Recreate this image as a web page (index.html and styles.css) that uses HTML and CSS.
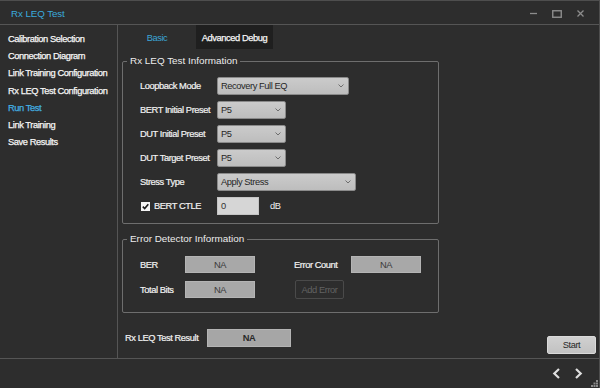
FILE: index.html
```html
<!DOCTYPE html>
<html>
<head>
<meta charset="utf-8">
<title>Rx LEQ Test</title>
<link rel="stylesheet" href="styles.css">
</head>
<body>
<div class="window">
  <header class="titlebar">
    <span class="title">Rx LEQ Test</span>
    <div class="winctl">
      <svg class="ctl" width="7" height="7" viewBox="0 0 7 7"><path d="M0 3.5H7" stroke="#8c8c8c" stroke-width="1.3"/></svg>
      <svg class="ctl" width="10" height="8" viewBox="0 0 10 8"><rect x="0.75" y="0.75" width="8.5" height="6.5" fill="none" stroke="#8c8c8c" stroke-width="1.4"/></svg>
      <svg class="ctl" width="7" height="7" viewBox="0 0 7 7"><path d="M0.5 0.5L6.5 6.5M6.5 0.5L0.5 6.5" stroke="#8c8c8c" stroke-width="1.3"/></svg>
    </div>
  </header>
  <div class="main">
    <nav class="sidebar">
      <div class="nav-item">Calibration Selection</div>
      <div class="nav-item">Connection Diagram</div>
      <div class="nav-item">Link Training Configuration</div>
      <div class="nav-item">Rx LEQ Test Configuration</div>
      <div class="nav-item active">Run Test</div>
      <div class="nav-item">Link Training</div>
      <div class="nav-item">Save Results</div>
    </nav>
    <section class="content">
      <div class="tabs">
        <div class="tab tab-active">Basic</div>
        <div class="tab tab-dark">Advanced Debug</div>
      </div>
      <div class="panel">
        <fieldset class="group group-info">
          <legend>Rx LEQ Test Information</legend>
          <div class="form-grid">
            <div class="lbl">Loopback Mode</div>
            <div class="select w-long"><span>Recovery Full EQ</span><svg class="chev" width="6" height="4" viewBox="0 0 6 4"><path d="M0.5 0.5L3 3L5.5 0.5" fill="none" stroke="#6e6e6e" stroke-width="1"/></svg></div>
            <div class="lbl">BERT Initial Preset</div>
            <div class="select w-short"><span>P5</span><svg class="chev" width="6" height="4" viewBox="0 0 6 4"><path d="M0.5 0.5L3 3L5.5 0.5" fill="none" stroke="#6e6e6e" stroke-width="1"/></svg></div>
            <div class="lbl">DUT Initial Preset</div>
            <div class="select w-short"><span>P5</span><svg class="chev" width="6" height="4" viewBox="0 0 6 4"><path d="M0.5 0.5L3 3L5.5 0.5" fill="none" stroke="#6e6e6e" stroke-width="1"/></svg></div>
            <div class="lbl">DUT Target Preset</div>
            <div class="select w-short"><span>P5</span><svg class="chev" width="6" height="4" viewBox="0 0 6 4"><path d="M0.5 0.5L3 3L5.5 0.5" fill="none" stroke="#6e6e6e" stroke-width="1"/></svg></div>
            <div class="lbl">Stress Type</div>
            <div class="select w-stress"><span>Apply Stress</span><svg class="chev" width="6" height="4" viewBox="0 0 6 4"><path d="M0.5 0.5L3 3L5.5 0.5" fill="none" stroke="#6e6e6e" stroke-width="1"/></svg></div>
            <div class="lbl check-lbl">
              <svg class="checkbox" width="9" height="9" viewBox="0 0 9 9"><rect x="0" y="0" width="9" height="9" fill="#f4f4f4"/><path d="M1.8 4.6L3.7 6.6L7.3 2.2" fill="none" stroke="#1a1a1a" stroke-width="1.6"/></svg>
              <span>BERT CTLE</span>
            </div>
            <div class="ctle">
              <div class="textbox">0</div>
              <span class="unit">dB</span>
            </div>
          </div>
        </fieldset>
        <fieldset class="group group-err">
          <legend>Error Detector Information</legend>
          <div class="err-grid">
            <div class="lbl">BER</div>
            <div class="field">NA</div>
            <div></div>
            <div class="lbl">Error Count</div>
            <div class="field">NA</div>
            <div class="lbl">Total Bits</div>
            <div class="field">NA</div>
            <div></div>
            <div class="btn-disabled">Add Error</div>
            <div></div>
          </div>
        </fieldset>
        <div class="bottom-row">
          <div class="result">
            <div class="lbl result-lbl">Rx LEQ Test Result</div>
            <div class="field result-field">NA</div>
          </div>
          <div class="btn-start">Start</div>
        </div>
      </div>
    </section>
  </div>
  <footer class="footer">
    <svg width="9" height="11" viewBox="0 0 9 11"><path d="M7 1L2.3 5.5L7 10" fill="none" stroke="#dedede" stroke-width="2.2"/></svg>
    <svg width="9" height="11" viewBox="0 0 9 11"><path d="M2 1L6.7 5.5L2 10" fill="none" stroke="#dedede" stroke-width="2.2"/></svg>
    <svg class="grip" width="7" height="7" viewBox="0 0 7 7"><rect x="5" y="0" width="2" height="2" fill="#8a8a8a"/><rect x="2.5" y="2.5" width="2" height="2" fill="#8a8a8a"/><rect x="5" y="2.5" width="2" height="2" fill="#8a8a8a"/><rect x="0" y="5" width="2" height="2" fill="#8a8a8a"/><rect x="2.5" y="5" width="2" height="2" fill="#8a8a8a"/><rect x="5" y="5" width="2" height="2" fill="#8a8a8a"/></svg>
  </footer>
</div>
</body>
</html>
```

FILE: styles.css
```css
html, body {
  margin: 0;
  padding: 0;
  background: #2d2d2d;
}

body {
  width: 600px;
  height: 388px;
  overflow: hidden;
  font-family: "Liberation Sans", Arial, sans-serif;
  font-size: 9.3px;
  letter-spacing: -0.42px;
  color: #f0f0f0;
}

.window {
  position: relative;
  box-sizing: border-box;
  width: 600px;
  height: 388px;
  border-top: 1px solid #4e4e4e;
  border-right: 1px solid #4e4e4e;
  display: flex;
  flex-direction: column;
}

/* Title bar */
.titlebar {
  height: 24px;
  border-bottom: 1px solid #555555;
  display: flex;
  align-items: center;
  justify-content: space-between;
  padding: 2px 15px 0 11px;
  box-sizing: border-box;
  flex: none;
}

.title {
  font-size: 9.8px;
  letter-spacing: -0.1px;
  color: #3aa9dc;
}

.winctl {
  display: flex;
  align-items: center;
  gap: 15px;
}

.ctl {
  display: block;
}

/* Main area */
.main {
  display: flex;
  flex: 1;
  min-height: 0;
}

.sidebar {
  flex: none;
  width: 118px;
  border-right: 1px solid #555555;
  padding: 6px 0 0 8px;
  box-sizing: border-box;
}

.nav-item {
  line-height: 17.2px;
  white-space: nowrap;
  color: #f6f6f6;
  -webkit-text-stroke: 0.25px #f6f6f6;
}

.nav-item.active {
  color: #43b0e2;
  -webkit-text-stroke: 0.25px #43b0e2;
}

.content {
  flex: 1;
  display: flex;
  flex-direction: column;
  min-width: 0;
}

.tabs {
  display: flex;
  height: 24px;
  flex: none;
}

.tab {
  box-sizing: border-box;
  display: flex;
  align-items: center;
  justify-content: center;
  height: 24px;
  padding-top: 2px;
}

.tab-active {
  width: 78px;
  color: #3ba6d6;
}

.tab-dark {
  width: 77px;
  background: #1f1f1f;
  color: #f6f6f6;
  -webkit-text-stroke: 0.25px #f6f6f6;
}

.panel {
  flex: 1;
  display: flex;
  flex-direction: column;
  padding-left: 4px;
}

/* Group boxes */
.group {
  width: 317px;
  box-sizing: border-box;
  margin: 0;
  border: 1px solid #6e6e6e;
  border-radius: 2px;
  padding: 10px 4px 8px 4px;
  min-width: 0;
}

.group legend {
  font-size: 9.9px;
  letter-spacing: 0;
  line-height: 12px;
  padding: 0 3px;
  color: #ececec;
}

.group-info {
  margin-top: 6px;
}

.group-err {
  margin-top: 9px;
  padding: 11px 4px 13px 4px;
}

.form-grid {
  margin-left: 13px;
  display: grid;
  grid-template-columns: 77px auto;
  grid-auto-rows: 18px;
  row-gap: 6px;
  align-items: center;
}

.lbl {
  white-space: nowrap;
  color: #f2f2f2;
  -webkit-text-stroke: 0.2px #f2f2f2;
}

.select {
  box-sizing: border-box;
  height: 18px;
  border: 1px solid #8a8a8a;
  border-radius: 2px;
  background: linear-gradient(#cbcbcb, #bdbdbd);
  color: #262626;
  display: flex;
  align-items: center;
  justify-content: space-between;
  padding: 0 4px 0 3px;
}

.chev {
  display: block;
}

.w-long { width: 132px; }
.w-short { width: 69px; }
.w-stress { width: 139px; }

.check-lbl {
  display: flex;
  align-items: center;
  gap: 4px;
  padding-left: 1px;
}

.checkbox {
  display: block;
}

.ctle {
  display: flex;
  align-items: center;
  gap: 11px;
}

.textbox {
  box-sizing: border-box;
  width: 42px;
  height: 18px;
  background: #d6d6d6;
  border: 1px solid #c4c4c4;
  color: #333333;
  display: flex;
  align-items: center;
  padding-left: 3px;
}

.unit {
  color: #f0f0f0;
}

/* Error detector */
.err-grid {
  margin-left: 13px;
  display: grid;
  grid-template-columns: 45px 70px 39px 57px 70px;
  grid-template-rows: 17px 19px;
  row-gap: 7px;
  align-items: center;
}

.field {
  box-sizing: border-box;
  height: 17px;
  background: #a8a8a8;
  border: 1px solid #b4b4b4;
  color: #3a3a3a;
  display: flex;
  align-items: center;
  justify-content: center;
}

.btn-disabled {
  box-sizing: border-box;
  width: 49px;
  height: 19px;
  margin-left: 1px;
  border: 1px solid #4a4a4a;
  border-radius: 2px;
  color: #626262;
  display: flex;
  align-items: center;
  justify-content: center;
}

/* Bottom row */
.bottom-row {
  margin-top: auto;
  display: flex;
  justify-content: space-between;
  padding: 0 3px 4px 3px;
}

.result {
  display: flex;
  align-items: center;
  align-self: flex-start;
}

.result-lbl {
  width: 82px;
}

.result-field {
  width: 84px;
  height: 18px;
  font-weight: bold;
  color: #2a2a2a;
  background: #a6a6a6;
}

.btn-start {
  box-sizing: border-box;
  margin-top: 7px;
  width: 49px;
  height: 18px;
  background: linear-gradient(#d0d0d0, #c2c2c2);
  border: 1px solid #dadada;
  border-radius: 2px;
  color: #262626;
  display: flex;
  align-items: center;
  justify-content: center;
}

/* Footer */
.footer {
  height: 29px;
  flex: none;
  border-top: 1px solid #555555;
  display: flex;
  align-items: center;
  justify-content: flex-end;
  gap: 13px;
  padding-right: 16px;
}

.footer svg {
  display: block;
}

.grip {
  position: absolute;
  right: 1px;
  bottom: 1px;
}
```
